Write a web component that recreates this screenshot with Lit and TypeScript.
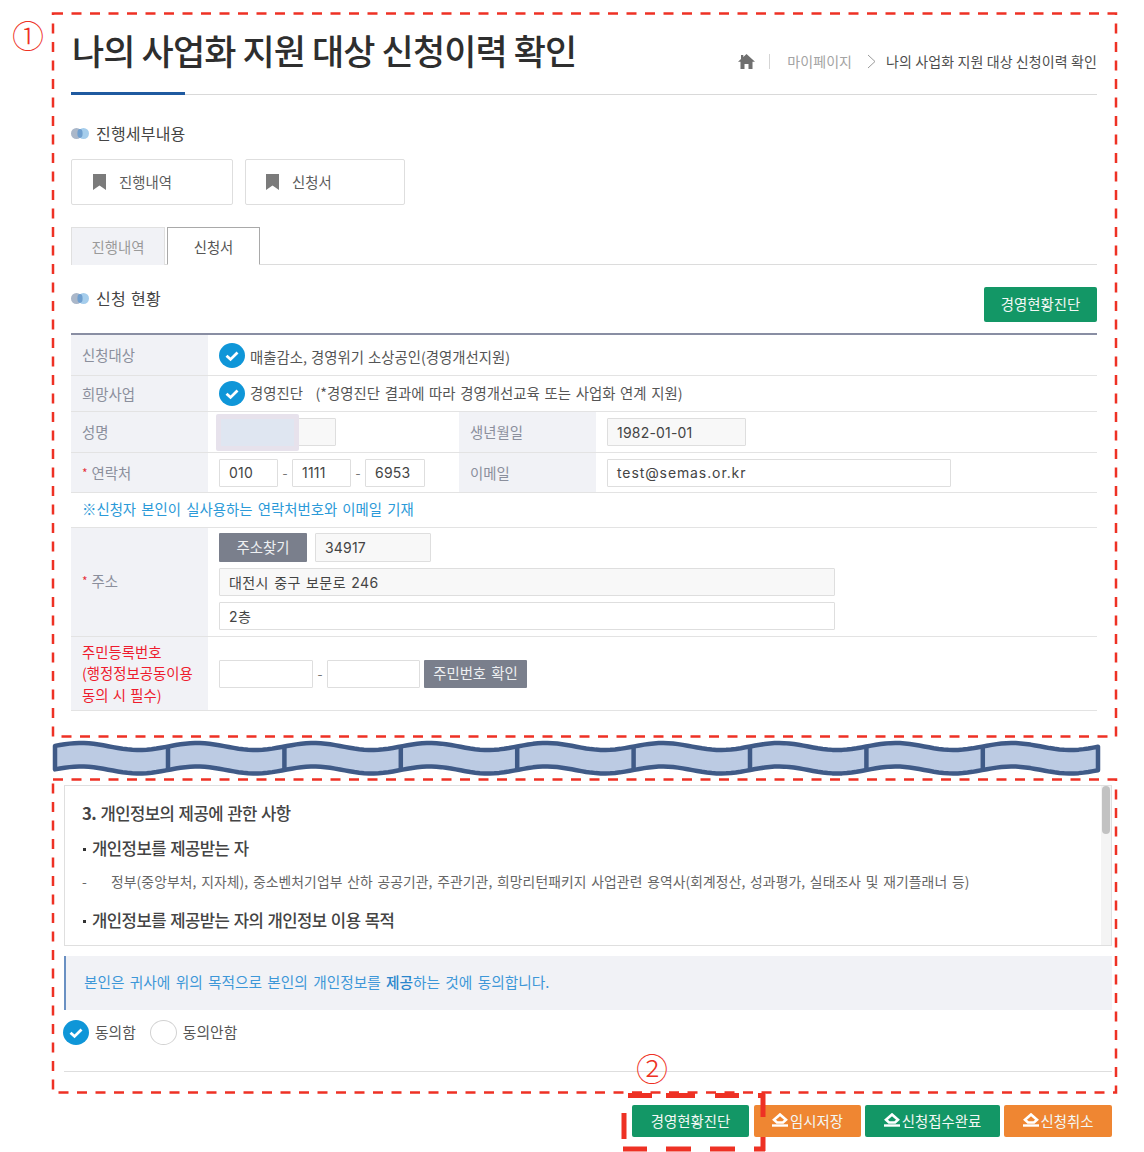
import { LitElement, html, css, svg } from "lit";
import { customElement } from "lit/decorators.js";

const check = (cls = "chk") => html`<svg class=${cls} viewBox="0 0 26 25"><ellipse cx="13" cy="12.5" rx="13" ry="12.5" fill="#0f96d8"/><path d="M7.5 12.8l4 3.6 7-7" fill="none" stroke="#fff" stroke-width="2.8"/></svg>`;
const bullet = html`<svg class="bul" viewBox="0 0 18 11"><circle cx="5.5" cy="5.5" r="5.5" fill="#aab7c9"/><circle cx="12.5" cy="5.5" r="5.5" fill="#a5cdec"/><ellipse cx="9" cy="5.5" rx="2.6" ry="4.4" fill="#6f9fcf"/></svg>`;
const mark = html`<svg class="mark" viewBox="0 0 13 16"><path d="M0 0h13v16L6.500 11.500 0 16z" fill="#7b7b7b"/></svg>`;
const roof = html`<svg class="roof" viewBox="0 0 16 14"><path d="M8 1.500L14 6.800 11 9.500H5L2 6.800z" fill="none" stroke="#fff" stroke-width="2.600"/><path d="M0 12.500h16" stroke="#fff" stroke-width="2.400"/></svg>`;

const P = 116.4, X0 = 51.6, A = 3.5, START = 55, END = 1098;
const DIVS = [1, 2, 3, 4, 5, 6, 7, 8].map((i) => X0 + i * P);
function waveY(x: number, base: number) {
  return base - A * Math.sin((2 * Math.PI * (x - X0)) / P);
}
function waves(): string {
  const pts: string[] = [];
  const steps = 216;
  for (let i = 0; i <= steps; i++) {
    const x = START + (i / steps) * (END - START);
    pts.push(`${x.toFixed(1)} ${waveY(x, 3.5).toFixed(2)}`);
  }
  for (let i = steps; i >= 0; i--) {
    const x = START + (i / steps) * (END - START);
    pts.push(`${x.toFixed(1)} ${waveY(x, 27).toFixed(2)}`);
  }
  return "M" + pts.join("L") + "Z";
}

@customElement("app-root")
export class AppRoot extends LitElement {
  static styles = css`
    :host { display: block; position: relative; width: 1144px; height: 1152px; overflow: hidden; background: #fff; font-family: "Noto Sans CJK KR", "Noto Sans", sans-serif; color: #555; font-size: 14.4px; word-spacing: 2px; }
    * { box-sizing: border-box; }
    .main { margin-left: 71px; width: 1026px; }
    .head { height: 95px; border-bottom: 1px solid #d9d9d9; display: flex; justify-content: space-between; position: relative; }
    .head::after { content: ""; position: absolute; left: 0; bottom: -1px; width: 114px; height: 3px; background: #1f5aa0; }
    h1 { margin: 25px 0 0 1px; font-size: 35px; line-height: 50px; font-weight: 500; color: #2e2e2e; letter-spacing: -.9px; word-spacing: 0; white-space: nowrap; }
    .crumb { display: flex; align-items: center; height: 24px; margin-top: 49px; font-size: 14px; letter-spacing: .1px; word-spacing: 0; }
    .home { width: 17px; height: 15px; margin-right: 14px; }
    .sep { width: 1px; height: 15px; background: #d5d5d5; margin-right: 17px; }
    .mid { color: #a3a3a3; }
    .gt { width: 10px; height: 15px; margin: 0 9px 0 15px; }
    .cur { color: #4e4e4e; }
    .sec { display: flex; align-items: center; gap: 7px; color: #444; font-size: 16px; letter-spacing: .2px; word-spacing: 1.500px; line-height: 24px; }
    .bul { width: 18px; height: 11px; flex: none; }
    .s1 { margin-top: 26px; }
    .cards { display: flex; gap: 12px; margin-top: 14px; }
    .card { width: 160px; height: 46px; border: 1px solid #dedede; border-radius: 2px; display: flex; align-items: center; padding-left: 20px; gap: 13px; color: #5c5c5c; }
    .card:first-child { width: 162px; padding-left: 21px; }
    .card span { margin-top: -2px; }
    .mark { width: 13px; height: 16px; }
    .tabs { display: flex; gap: 2px; margin-top: 22px; height: 38px; border-bottom: 1px solid #dcdcdc; }
    .tab { height: 38px; display: flex; align-items: center; justify-content: center; border: 1px solid #e0e0e0; border-bottom: 0; width: 94px; background: #f1f2f6; color: #9a9a9a; }
    .tab.on { width: 93px; background: #fff; color: #555; border-color: #a9a9a9; border-bottom: 1px solid #fff; }
    .bar { display: flex; justify-content: space-between; margin-top: 22px; height: 46px; }
    .bar .sec { height: 24px; margin-top: -1px; }
    .btn { display: flex; align-items: center; justify-content: center; color: #f3f8f5; border-radius: 2px; padding-bottom: 2px; }
    .green { background: #139766; }
    .orange { background: #ef8632; }
    .bar .btn { width: 113px; height: 35px; }
    .tbl { border-top: 2px solid #898ea3; }
    .row { display: grid; grid-template-columns: 137px 251px 137px 1fr; border-bottom: 1px solid #e3e3e3; align-items: stretch; }
    .th { background: #f1f2f6; color: #8b8f9c; padding: 0 0 1px 11px; display: flex; align-items: center; }
    .th b { color: #e6333c; font-weight: 400; margin-right: 4px; font-size: 12px; }
    .tall { padding-bottom: 4px; }
    .td { padding-left: 11px; display: flex; align-items: center; gap: 5px; color: #555; }
    .wide { grid-column: 2 / -1; }
    .down { padding-top: 3px; word-spacing: .8px; }
    .chk { width: 26px; height: 25px; flex: none; }
    .down .chk { margin-top: -3px; }
    .upper { word-spacing: 1.500px; }
    .upper .lbl { margin-top: -3px; }
    .gap { margin-left: 3px; }
    .in { height: 28px; border: 1px solid #dedede; border-radius: 1px; background: #fff; display: flex; align-items: center; padding-left: 9px; font-family: Inter, "Noto Sans CJK KR", sans-serif; font-size: 14px; letter-spacing: .2px; color: #444; word-spacing: 1px; flex: none; }
    .ko { letter-spacing: .4px; }
    .em { letter-spacing: .9px; }
    .ro { background: #f8f8f8; }
    .dash { width: 9px; text-align: center; flex: none; color: #777; }
    .tight { gap: 2.500px; }
    .name { position: relative; }
    .name .in { width: 117px; }
    .blur { position: absolute; left: 8px; top: 2px; width: 83px; height: 37px; background: #dfe6f1; border: 5px solid #e7e2ec; border-radius: 2px; }
    .note { height: 35px; padding: 0 0 3px 11px; display: flex; align-items: center; border-bottom: 1px solid #e3e3e3; color: #2b9ad8; }
    .stack { flex-direction: column; align-items: flex-start; gap: 6px; padding-top: 5px; padding-bottom: 5px; }
    .line { display: flex; gap: 8px; }
    .gray { background: #7a7f8c; color: #eef0f2; width: 88px; height: 29px; border-radius: 1px; }
    .red { color: #ee1c2e; line-height: 21.500px; word-spacing: 1px; }
    .wave { display: block; margin-top: 32px; width: 1144px; height: 35px; overflow: visible; }
    .box2 { margin: 7px 0 0 64px; width: 1048px; height: 161px; border: 1px solid #dfdfdf; position: relative; padding: 15px 17px; color: #444; }
    .box2 div { font-size: 16.700px; line-height: 24px; word-spacing: 1px; }
    .t { font-weight: 500; letter-spacing: -.55px; }
    .t b { font-weight: 700; }
    .sq::before { content: ""; display: inline-block; width: 3px; height: 3px; background: #333; margin: 0 6px 4px 1px; }
    .sub { margin-top: 11px; }
    .box2 .li { font-size: 13.800px; display: flex; color: #666; margin-top: 9px; word-spacing: 1.500px; letter-spacing: .1px; }
    .li span:first-child { width: 29px; }
    .tail { margin-top: 15px; }
    .track { position: absolute; right: 0; top: 0; bottom: 0; width: 10px; background: #f4f4f4; }
    .thumb { position: absolute; right: 1px; top: 0; width: 8px; height: 48px; background: #c2c2c2; border-radius: 4px; }
    .consent { margin: 10px 0 0 64px; width: 1048px; height: 54px; background: #f1f2f6; border-left: 2px solid #6a90c2; padding: 0 0 3px 18px; display: flex; align-items: center; color: #3d97d8; font-size: 14.700px; word-spacing: 2px; }
    .consent b { font-weight: 500; color: #2a86cc; }
    .radios { margin: 10px 0 0 63px; display: flex; align-items: center; height: 24px; color: #555; font-size: 14.800px; word-spacing: 0; }
    .radios span { margin: -1px 14px 0 6px; }
    .empty { width: 27px; height: 25px; border: 1.500px solid #d2d2d2; border-radius: 50%; flex: none; }
    .rule { margin: 27px 0 0 64px; width: 1048px; height: 1px; background: #dedede; }
    .actions { margin: 33px 0 0 632px; display: flex; height: 32px; }
    .actions .btn { height: 32px; gap: 2px; }
    .roof { width: 16px; height: 14px; }
    .over { position: absolute; left: 0; top: 0; pointer-events: none; }
    .num { position: absolute; color: #ee3124; font-size: 32px; line-height: 32px; font-weight: 300; }
  `;

  render() {
    return html`
      <div class="main">
        <div class="head">
          <h1>나의 사업화 지원 대상 신청이력 확인</h1>
          <div class="crumb">
            <svg class="home" viewBox="0 0 17 15"><path d="M8.500 0L17 7.800h-2.500V15h-4v-5h-4v5h-4V7.800H0L3 5V1h2.300v1.900z" fill="#6f6f6f"/></svg>
            <i class="sep"></i><span class="mid">마이페이지</span>
            <svg class="gt" viewBox="0 0 10 15"><path d="M1 1l7 6.500-7 6.500" fill="none" stroke="#9a9a9a" stroke-width="1"/></svg>
            <span class="cur">나의 사업화 지원 대상 신청이력 확인</span>
          </div>
        </div>
        <div class="sec s1">${bullet}진행세부내용</div>
        <div class="cards">
          <div class="card">${mark}<span>진행내역</span></div>
          <div class="card">${mark}<span>신청서</span></div>
        </div>
        <div class="tabs"><div class="tab">진행내역</div><div class="tab on">신청서</div></div>
        <div class="bar">
          <div class="sec">${bullet}신청 현황</div>
          <div class="btn green">경영현황진단</div>
        </div>
        <div class="tbl">
          <div class="row" style="height:41px"><div class="th">신청대상</div><div class="td wide down">${check()}매출감소, 경영위기 소상공인(경영개선지원)</div></div>
          <div class="row" style="height:36px"><div class="th">희망사업</div><div class="td wide upper">${check()}<span class="lbl">경영진단 &nbsp;<span class="gap">(*경영진단 결과에 따라 경영개선교육 또는 사업화 연계 지원)</span></span></div></div>
          <div class="row" style="height:41px">
            <div class="th">성명</div>
            <div class="td name"><div class="in ro"></div><div class="blur"></div></div>
            <div class="th">생년월일</div>
            <div class="td"><div class="in ro" style="width:139px">1982-01-01</div></div>
          </div>
          <div class="row" style="height:40px">
            <div class="th"><b>*</b>연락처</div>
            <div class="td tight"><div class="in" style="width:59px">010</div><span class="dash">-</span><div class="in" style="width:59px">1111</div><span class="dash">-</span><div class="in" style="width:60px">6953</div></div>
            <div class="th">이메일</div>
            <div class="td"><div class="in em" style="width:344px">test@semas.or.kr</div></div>
          </div>
          <div class="note">※신청자 본인이 실사용하는 연락처번호와 이메일 기재</div>
          <div class="row" style="height:109px">
            <div class="th tall"><b>*</b>주소</div>
            <div class="td wide stack">
              <div class="line"><div class="btn gray">주소찾기</div><div class="in ro" style="width:116px;height:29px">34917</div></div>
              <div class="in ro ko" style="width:616px">대전시 중구 보문로 246</div>
              <div class="in ko" style="width:616px">2층</div>
            </div>
          </div>
          <div class="row" style="height:74px">
            <div class="th red">주민등록번호<br />(행정정보공동이용<br />동의 시 필수)</div>
            <div class="td wide tight"><div class="in" style="width:94px"></div><span class="dash">-</span><div class="in" style="width:93px"></div><div class="btn gray" style="width:103px;height:28px;margin-left:1.500px">주민번호 확인</div></div>
          </div>
        </div>
      </div>

      <svg class="wave" viewBox="0 0 1144 35">
        <path d=${waves()} fill="#bccbe3" stroke="#3f5a87" stroke-width="4.500" stroke-linejoin="round"/>
        ${DIVS.map((x) => svg`<path d="M${x} 4V27" stroke="#3f5a87" stroke-width="4.500"/>`)}
      </svg>

      <div class="box2">
        <div class="t"><b>3.</b> 개인정보의 제공에 관한 사항</div>
        <div class="t sub sq">개인정보를 제공받는 자</div>
        <div class="li"><span>-</span><span>정부(중앙부처, 지자체), 중소벤처기업부 산하 공공기관, 주관기관, 희망리턴패키지 사업관련 용역사(회계정산, 성과평가, 실태조사 및 재기플래너 등)</span></div>
        <div class="t tail sq">개인정보를 제공받는 자의 개인정보 이용 목적</div>
        <div class="track"></div><div class="thumb"></div>
      </div>
      <div class="consent"><span>본인은 귀사에 위의 목적으로 본인의 개인정보를 <b>제공</b>하는 것에 동의합니다.</span></div>
      <div class="radios">${check()}<span>동의함</span><i class="empty"></i><span>동의안함</span></div>
      <div class="rule"></div>
      <div class="actions">
        <div class="btn green" style="width:117px">경영현황진단</div>
        <div class="btn orange" style="width:107px;margin-left:5px">${roof}임시저장</div>
        <div class="btn green" style="width:135px;margin-left:4px">${roof}신청접수완료</div>
        <div class="btn orange" style="width:108px;margin-left:4px">${roof}신청취소</div>
      </div>

      <svg class="over" width="1144" height="1152" fill="none" stroke="#ee3124">
        <rect x="53" y="13.500" width="1063" height="723" stroke-width="2.500" stroke-dasharray="10 8.500"/>
        <rect x="53" y="779.500" width="1063" height="313" stroke-width="2.500" stroke-dasharray="10 8.500"/>
        <path stroke-width="5" d="M628 1095.500h24M666 1095.500h29M715 1095.500h24M758 1095.500h7M624 1113v26M763 1094v23M763 1137v14M765 1149h-11M735 1149h-25M691 1149h-25M647 1149h-24"/>
      </svg>
      <div class="num" style="left:12px;top:18px">①</div>
      <div class="num" style="left:636px;top:1051px">②</div>
    `;
  }
}
